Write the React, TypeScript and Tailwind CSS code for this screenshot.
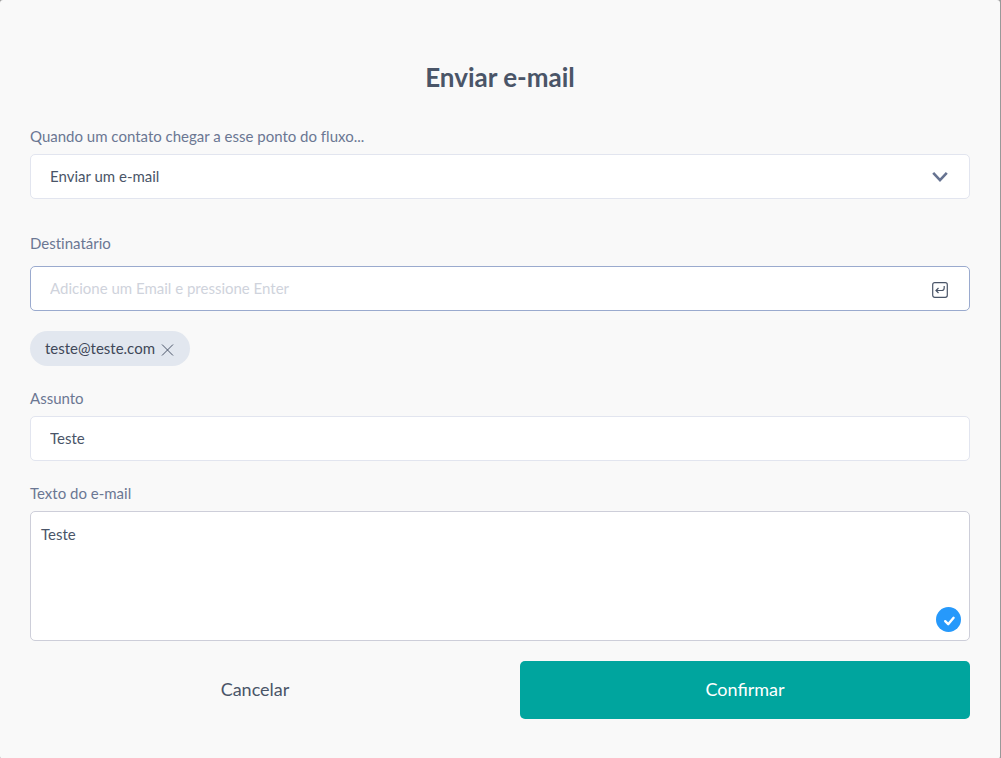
import { useState } from 'react';

const fieldStyle =
  'block h-[45px] w-full rounded-[5px] border bg-white px-[19px] text-[15px] text-[#4a5568] outline-none';
const labelStyle =
  'block text-[15px] leading-[18px] text-[#6b7793] [font-variant-ligatures:none]';

function App() {
  const [emails, setEmails] = useState(['teste@teste.com']);
  const [draft, setDraft] = useState('');

  function addEmail() {
    if (!draft.trim()) return;
    setEmails([...emails, draft.trim()]);
    setDraft('');
  }

  return (
    <div className="min-h-screen bg-[#999999] pr-px font-['Lato',sans-serif]">
      <form
        className="flex min-h-screen flex-col rounded-[3px] bg-[#f9f9f9] px-[30px] pt-[60px] pb-10"
        onSubmit={(e) => e.preventDefault()}
      >
        <h1 className="text-center text-[26px] leading-[34px] font-bold text-[#4a5568]">
          Enviar e-mail
        </h1>

        <label htmlFor="action" className={`${labelStyle} mt-[33px]`}>
          Quando um contato chegar a esse ponto do fluxo...
        </label>
        <div className="relative mt-[9px]">
          <select
            id="action"
            className={`${fieldStyle} appearance-none border-[#e2e5ef]`}
          >
            <option>Enviar um e-mail</option>
          </select>
          <svg
            className="pointer-events-none absolute top-[17px] right-[22px] h-3 w-4"
            viewBox="0 0 16 12"
            fill="none"
            stroke="#667391"
            strokeWidth="2.6"
          >
            <path d="M1.2 1.8 8 9.2l6.8-7.4" />
          </svg>
        </div>

        <label htmlFor="recipient" className={`${labelStyle} mt-[35px]`}>
          Destinatário
        </label>
        <div className="relative mt-[14px]">
          <input
            id="recipient"
            type="email"
            value={draft}
            placeholder="Adicione um Email e pressione Enter"
            className={`${fieldStyle} border-[#9aaace] pb-0.5 placeholder:text-[#cfd3dc]`}
            onChange={(e) => setDraft(e.target.value)}
            onKeyDown={(e) => e.key === 'Enter' && addEmail()}
          />
          <button
            type="button"
            aria-label="Adicionar"
            className="absolute top-4 right-[22px]"
            onClick={addEmail}
          >
            <svg
              className="size-4"
              viewBox="0 0 16 16"
              fill="none"
              stroke="#4a5568"
              strokeWidth="1.2"
            >
              <rect x="0.7" y="0.7" width="14.6" height="14.6" rx="2" />
              <path d="M12.2 4v2q0 2.5-2.5 2.5H4.2M6.5 6 4 8.5l2.5 2.5" />
            </svg>
          </button>
        </div>

        <div className="mt-5 flex flex-wrap gap-2">
          {emails.map((email) => (
            <span
              key={email}
              className="flex h-[35px] items-center gap-[5px] rounded-full bg-[#e2e7ef] px-[15px] text-[15px] text-[#3f4859]"
            >
              {email}
              <button
                type="button"
                aria-label={`Remover ${email}`}
                onClick={() => setEmails(emails.filter((e) => e !== email))}
              >
                <svg
                  className="h-3.5 w-[15px]"
                  viewBox="0 0 15 14"
                  stroke="#4a5568"
                >
                  <path d="m2 2.5 11 11m0-11-11 11" />
                </svg>
              </button>
            </span>
          ))}
        </div>

        <label htmlFor="subject" className={`${labelStyle} mt-[23px]`}>
          Assunto
        </label>
        <input
          id="subject"
          defaultValue="Teste"
          className={`${fieldStyle} mt-[9px] border-[#e2e5ef] pb-0.5`}
        />

        <label htmlFor="body" className={`${labelStyle} mt-[23px]`}>
          Texto do e-mail
        </label>
        <div className="relative mt-[9px]">
          <textarea
            id="body"
            defaultValue="Teste"
            className="block h-[130px] w-full resize-none rounded-[5px] border border-[#cdced9] bg-white px-2.5 py-[11px] text-[15px] leading-[22px] text-[#4a5568] outline-none"
          />
          <svg
            className="absolute right-[9px] bottom-[9px] size-[25px]"
            viewBox="0 0 25 25"
            fill="none"
          >
            <circle cx="12.5" cy="12.5" r="12.5" fill="#2699fb" />
            <path
              d="m9.2 14.2 3 3 5.4-6.4"
              stroke="#fff"
              strokeWidth="2.4"
              strokeLinecap="round"
              strokeLinejoin="round"
            />
          </svg>
        </div>

        <div className="mt-5 grid grid-cols-2 gap-10">
          <button
            type="button"
            className="h-[58px] rounded-[5px] pb-0.5 text-lg text-[#4a5568]"
          >
            Cancelar
          </button>
          <button
            type="submit"
            className="h-[58px] rounded-[5px] bg-[#00a59e] pb-0.5 text-lg text-white"
          >
            Confirmar
          </button>
        </div>
      </form>
    </div>
  );
}

export default App;
